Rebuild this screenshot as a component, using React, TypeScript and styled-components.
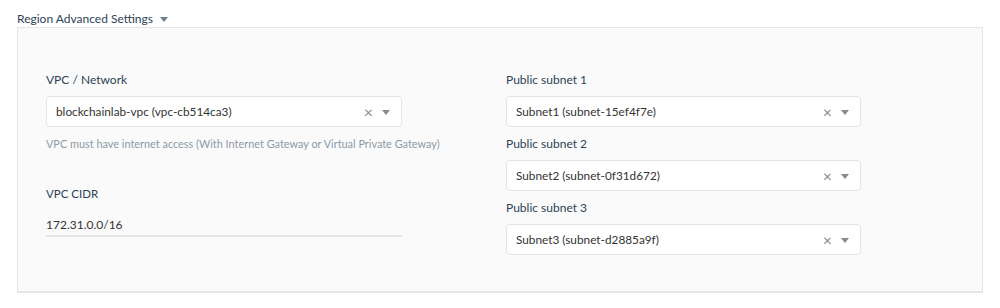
import React from 'react';
import styled, { createGlobalStyle } from 'styled-components';

const GlobalStyle = createGlobalStyle`
  html, body {
    margin: 0;
    padding: 0;
    background: #ffffff;
    font-family: Lato, "Open Sans", "Liberation Sans", sans-serif;
  }
`;

const Page = styled.div`
  width: 1000px;
  height: 308px;
  padding: 10px 17px 0 17px;
  box-sizing: border-box;
`;

const SectionTitle = styled.div`
  display: flex;
  align-items: center;
  gap: 7px;
  height: 17px;
  font-size: 12px;
  color: #2c4257;
`;

const Caret = styled.span<{ tint?: string }>`
  display: inline-block;
  width: 0;
  height: 0;
  border-left: 4.5px solid transparent;
  border-right: 4.5px solid transparent;
  border-top: 5px solid ${p => p.tint || '#6f7f8e'};
  margin-top: 1px;
`;

const Panel = styled.div`
  width: 966px;
  height: 266px;
  box-sizing: border-box;
  background: #fafafa;
  border: 1px solid #e4e6e8;
  border-bottom-width: 2px;
  padding: 43px 0 0 28px;
  display: grid;
  grid-template-columns: 356px 355px;
  column-gap: 104px;
  align-content: start;
`;

const Column = styled.div`
  display: flex;
  flex-direction: column;
`;

const Label = styled.div<{ small?: boolean }>`
  font-size: ${p => (p.small ? '11.5px' : '12px')};
  color: #2c4257;
  height: 17px;
  line-height: 17px;
  margin-bottom: 8px;
`;

const SelectBox = styled.div`
  height: 31px;
  box-sizing: border-box;
  background: #ffffff;
  border: 1px solid #e2e4e6;
  border-radius: 4px;
  display: flex;
  align-items: center;
  padding: 0 11px 0 9px;
  font-size: 11.8px;
  color: #333;
`;

const SelectValue = styled.span`
  flex: 1;
`;

const Clear = styled.span`
  font-size: 16px;
  color: #8c8c8c;
  margin-right: 9px;
  line-height: 1;
`;

const Help = styled.div`
  font-size: 10.9px;
  color: #8c9aa7;
  margin-top: 9px;
  height: 16px;
  line-height: 16px;
  white-space: nowrap;
`;

const Field = styled.div<{ gap?: number }>`
  display: flex;
  flex-direction: column;
  margin-top: ${p => p.gap ?? 0}px;
`;

const TextValue = styled.div`
  font-size: 12px;
  color: #333;
  height: 27px;
  padding-top: 6px;
  line-height: 18px;
  border-bottom: 2px solid #e4e6e8;
  box-sizing: border-box;
`;

const Select = ({ value }: { value: string }) => (
  <SelectBox>
    <SelectValue>{value}</SelectValue>
    <Clear>×</Clear>
    <Caret tint="#8a8a8a" />
  </SelectBox>
);

const App: React.FC = () => (
  <Page>
    <GlobalStyle />
    <SectionTitle>
      Region Advanced Settings
      <Caret />
    </SectionTitle>
    <Panel>
      <Column>
        <Field>
          <Label>VPC / Network</Label>
          <Select value="blockchainlab-vpc (vpc-cb514ca3)" />
          <Help>VPC must have internet access (With Internet Gateway or Virtual Private Gateway)</Help>
        </Field>
        <Field gap={33}>
          <Label small>VPC CIDR</Label>
          <TextValue>172.31.0.0/16</TextValue>
        </Field>
      </Column>
      <Column>
        <Field>
          <Label>Public subnet 1</Label>
          <Select value="Subnet1 (subnet-15ef4f7e)" />
        </Field>
        <Field gap={8}>
          <Label>Public subnet 2</Label>
          <Select value="Subnet2 (subnet-0f31d672)" />
        </Field>
        <Field gap={8}>
          <Label>Public subnet 3</Label>
          <Select value="Subnet3 (subnet-d2885a9f)" />
        </Field>
      </Column>
    </Panel>
  </Page>
);

export default App;
